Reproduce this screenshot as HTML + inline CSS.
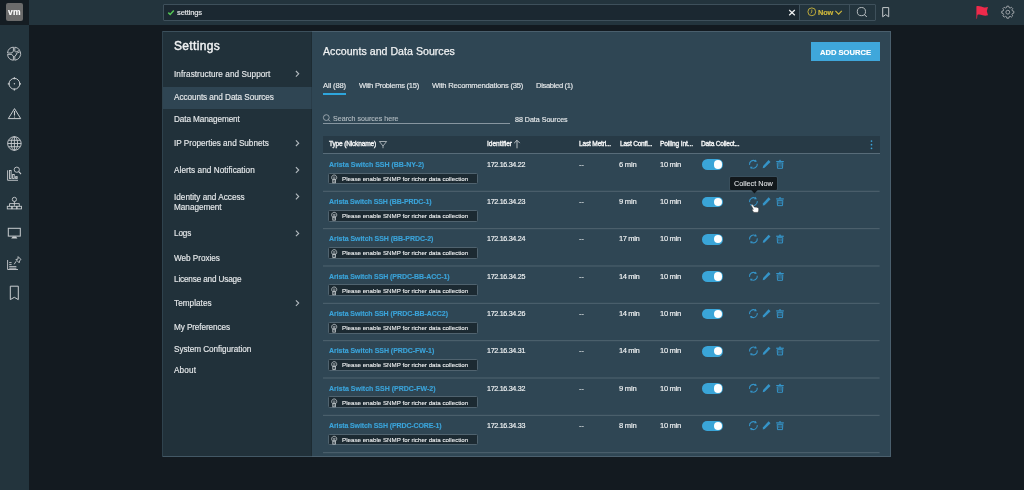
<!DOCTYPE html>
<html><head><meta charset="utf-8"><style>
html,body{margin:0;padding:0;}
body{width:1024px;height:490px;overflow:hidden;background:#131a20;position:relative;font-family:"Liberation Sans",sans-serif;}
.t{position:absolute;white-space:nowrap;line-height:1;will-change:transform;}
.r{position:absolute;}
svg{position:absolute;overflow:visible;}
</style></head><body>
<div class="r" style="left:0.00px;top:0.00px;width:1024.00px;height:25.00px;background:#23343d;"></div>
<div class="r" style="left:0.00px;top:25.00px;width:29.00px;height:465.00px;background:#23343d;"></div>
<div class="r" style="left:0.00px;top:0.00px;width:29.00px;height:25.00px;background:#151d23;"></div>
<div class="r" style="left:6.00px;top:3.00px;width:17.00px;height:18.00px;background:#6b6b6b;border-radius:2px;"></div>
<div class="t" style="left:8.00px;top:8.00px;font-size:8.5px;color:#ffffff;font-weight:bold;letter-spacing:0.357px;-webkit-text-stroke:0.15px #ffffff;">vm</div>
<svg width="1024" height="490" viewBox="0 0 1024 490" style="left:0;top:0;"><path d="M14.80 47.14 A6.6 6.6 0 0 1 19.75 50.29 L15.88 52.10 A2.4 2.4 0 0 0 14.80 51.40 Z M20.34 51.56 A6.6 6.6 0 0 1 14.80 60.26 L14.80 56.00 A2.4 2.4 0 0 0 16.48 53.36 Z M13.40 60.26 A6.6 6.6 0 0 1 7.54 54.40 L11.80 54.40 A2.4 2.4 0 0 0 13.40 56.00 Z M7.54 53.00 A6.6 6.6 0 0 1 13.40 47.14 L13.40 51.40 A2.4 2.4 0 0 0 11.80 53.00 Z " fill="none" stroke="#c9cdd0" stroke-width="0.9" stroke-linejoin="round"/><g fill="none" stroke="#c9cdd0" stroke-width="1"><circle cx="14.4" cy="83.8" r="5.4"/><path d="M14.4 77.2 V79.2 M14.4 90.39999999999999 V88.39999999999999 M7.800000000000001 83.8 H9.8 M21.0 83.8 H19.0" stroke-width="1.3"/></g><circle cx="14.4" cy="83.8" r="0.7" fill="#c9cdd0"/><path d="M14.5 108.6 L8.3 118.6 H20.7 Z" fill="none" stroke="#c9cdd0" stroke-width="1" stroke-linejoin="round"/><path d="M14.5 111 V115.6" stroke="#c9cdd0" stroke-width="1.1"/><circle cx="14.5" cy="117" r="0.6" fill="#c9cdd0"/><g fill="none" stroke="#c9cdd0" stroke-width="0.9"><circle cx="14.4" cy="143.5" r="6.8"/><ellipse cx="14.4" cy="143.5" rx="3.2" ry="6.8"/><path d="M14.4 136.7 V150.3 M7.6000000000000005 143.5 H21.2 M8.8 140.3 H20.0 M8.8 146.7 H20.0"/></g><g fill="none" stroke="#c9cdd0" stroke-width="0.9"><path d="M7.6 170.3 V180.3 H18"/><rect x="9.5" y="170.5" width="1.6" height="8" /><rect x="12.6" y="174.5" width="1.6" height="4"/><rect x="15.6" y="176.6" width="1.6" height="1.9"/><circle cx="16.8" cy="169.7" r="2.6"/><path d="M18.7 171.7 L21 174" stroke-width="1.1"/></g><g fill="none" stroke="#c9cdd0" stroke-width="0.9"><circle cx="14.4" cy="199.4" r="2.1"/><path d="M14.4 201.5 V205.8 M9.5 206.3 V203.6 H19.3 V206.3"/><rect x="7.3" y="206.3" width="4.4" height="2.6"/><rect x="12.2" y="206.3" width="4.4" height="2.6"/><rect x="17.1" y="206.3" width="4.4" height="2.6"/></g><rect x="8.3" y="228.3" width="12" height="7.8" fill="none" stroke="#c9cdd0" stroke-width="1"/><path d="M12.8 236.5 H16 L17.4 238.6 H11.2 Z" fill="#c9cdd0"/><g fill="none" stroke="#c9cdd0" stroke-width="0.9"><path d="M7.6 260 V269.5 H18 M9.2 262.6 H11.6 M9.2 264.6 H11.6 M9.2 266.6 H16.4 M9.2 268.2 H16.4" /><path d="M18.1 256.6 L21 259.5 L19.6 260.6 L19.2 262.8 L15.9 259.5 L18 259.1 Z M16.2 261.2 L14.2 264.3" stroke-linejoin="round"/></g><path d="M10.3 286.2 H18.3 V299.6 L14.3 297.3 L10.3 299.6 Z" fill="none" stroke="#c9cdd0" stroke-width="1"/></svg>
<div class="r" style="left:163.00px;top:4.00px;width:713.00px;height:17.00px;background:#1b2831;box-sizing:border-box;border:1px solid #3e505b;border-radius:1px;"></div>
<div class="r" style="left:800.00px;top:5.00px;width:75.00px;height:15.00px;background:#23343d;"></div>
<div class="r" style="left:799.00px;top:5.00px;width:1.00px;height:15.00px;background:#3e505b;"></div>
<div class="r" style="left:849.00px;top:5.00px;width:1.00px;height:15.00px;background:#3e505b;"></div>
<div class="t" style="left:177.00px;top:8.70px;font-size:7.6px;color:#e8eaec;letter-spacing:-0.149px;-webkit-text-stroke:0.15px #e8eaec;">settings</div>
<div class="t" style="left:818.00px;top:9.00px;font-size:7.4px;color:#cdb73c;font-weight:bold;letter-spacing:-0.207px;-webkit-text-stroke:0.15px #cdb73c;">Now</div>
<svg width="1024" height="490" viewBox="0 0 1024 490" style="left:0;top:0;"><path d="M168.3 12.6 L170.2 14.5 L173.8 10.4" fill="none" stroke="#54c455" stroke-width="1.5"/><path d="M789.2 10 L794.8 15.2 M794.8 10 L789.2 15.2" stroke="#f0f2f3" stroke-width="1.2"/><circle cx="811.8" cy="11.8" r="3.9" fill="none" stroke="#cdb73c" stroke-width="0.9"/><path d="M811.8 9.5 V12 L810.8 13.4" fill="none" stroke="#cdb73c" stroke-width="0.8"/><path d="M835.4 10.8 L838.6 14.2 L841.8 10.8" fill="none" stroke="#cdb73c" stroke-width="1.1"/><circle cx="861.4" cy="11.6" r="4.1" fill="none" stroke="#c4c9cc" stroke-width="0.9"/><path d="M864.3 14.5 L866.8 17" stroke="#c4c9cc" stroke-width="1"/><path d="M882.7 7.6 H888.7 V16.8 L885.7 14.6 L882.7 16.8 Z" fill="none" stroke="#c4c9cc" stroke-width="1"/><path d="M976.4 6.2 C979 5.4 981.5 6.6 984.2 7.4 C985.6 7.6 986.9 7.2 988 7 L986.8 11 L988 15.2 C986.4 15.8 984.6 15.9 982.6 15.3 C980.6 14.6 978.6 14.2 977.4 15 L977 18.8 L976.4 18.8 Z" fill="#ee2a4b"/><path d="M1006.56 7.56 L1006.85 6.18 L1008.75 6.18 L1009.04 7.56 L1010.20 8.04 L1011.39 7.26 L1012.74 8.61 L1011.96 9.80 L1012.44 10.96 L1013.82 11.25 L1013.82 13.15 L1012.44 13.44 L1011.96 14.60 L1012.74 15.79 L1011.39 17.14 L1010.20 16.36 L1009.04 16.84 L1008.75 18.22 L1006.85 18.22 L1006.56 16.84 L1005.40 16.36 L1004.21 17.14 L1002.86 15.79 L1003.64 14.60 L1003.16 13.44 L1001.78 13.15 L1001.78 11.25 L1003.16 10.96 L1003.64 9.80 L1002.86 8.61 L1004.21 7.26 L1005.40 8.04 Z" fill="none" stroke="#a9aeb2" stroke-width="0.9" stroke-linejoin="round"/><circle cx="1007.8" cy="12.2" r="1.9" fill="none" stroke="#a9aeb2" stroke-width="0.9"/></svg>
<div class="r" style="left:163.00px;top:32.00px;width:149.00px;height:424.00px;background:#21313a;"></div>
<div class="r" style="left:312.00px;top:32.00px;width:578.00px;height:424.00px;background:#2f4654;"></div>
<div class="r" style="left:163.00px;top:87.00px;width:149.00px;height:22.00px;background:#2f4553;"></div>
<div class="r" style="left:162.00px;top:31.00px;width:150.00px;height:1.00px;background:#3c505c;"></div>
<div class="r" style="left:312.00px;top:31.00px;width:579.00px;height:1.00px;background:#4a5f6d;"></div>
<div class="r" style="left:162.00px;top:31.00px;width:1.00px;height:426.00px;background:#2f424d;"></div>
<div class="r" style="left:890.00px;top:31.00px;width:1.00px;height:426.00px;background:#4a5f6d;"></div>
<div class="r" style="left:163.00px;top:456.00px;width:149.00px;height:1.00px;background:#435865;"></div>
<div class="r" style="left:312.00px;top:456.00px;width:579.00px;height:1.00px;background:#4b606e;"></div>
<div class="r" style="left:311.00px;top:32.00px;width:1.00px;height:424.00px;background:rgba(0,0,0,0.12);"></div>
<div class="t" style="left:174.00px;top:39.50px;font-size:12px;color:#f0f2f3;letter-spacing:0.330px;-webkit-text-stroke:0.45px #f0f2f3;">Settings</div>
<div class="t" style="left:174.00px;top:70.80px;font-size:8.2px;color:#e6e9eb;letter-spacing:0.051px;-webkit-text-stroke:0.15px #e6e9eb;">Infrastructure and Support</div>
<div class="t" style="left:174.00px;top:94.20px;font-size:8.2px;color:#e6e9eb;letter-spacing:-0.066px;-webkit-text-stroke:0.15px #e6e9eb;">Accounts and Data Sources</div>
<div class="t" style="left:174.00px;top:116.30px;font-size:8.2px;color:#e6e9eb;letter-spacing:-0.111px;-webkit-text-stroke:0.15px #e6e9eb;">Data Management</div>
<div class="t" style="left:174.00px;top:140.20px;font-size:8.2px;color:#e6e9eb;letter-spacing:-0.027px;-webkit-text-stroke:0.15px #e6e9eb;">IP Properties and Subnets</div>
<div class="t" style="left:174.00px;top:167.00px;font-size:8.2px;color:#e6e9eb;letter-spacing:0.049px;-webkit-text-stroke:0.15px #e6e9eb;">Alerts and Notification</div>
<div class="t" style="left:174.00px;top:193.50px;font-size:8.2px;color:#e6e9eb;letter-spacing:0.008px;-webkit-text-stroke:0.15px #e6e9eb;">Identity and Access</div>
<div class="t" style="left:174.00px;top:204.10px;font-size:8.2px;color:#e6e9eb;letter-spacing:-0.016px;-webkit-text-stroke:0.15px #e6e9eb;">Management</div>
<div class="t" style="left:174.00px;top:230.40px;font-size:8.2px;color:#e6e9eb;letter-spacing:-0.145px;-webkit-text-stroke:0.15px #e6e9eb;">Logs</div>
<div class="t" style="left:174.00px;top:254.70px;font-size:8.2px;color:#e6e9eb;letter-spacing:-0.030px;-webkit-text-stroke:0.15px #e6e9eb;">Web Proxies</div>
<div class="t" style="left:174.00px;top:276.30px;font-size:8.2px;color:#e6e9eb;letter-spacing:-0.165px;-webkit-text-stroke:0.15px #e6e9eb;">License and Usage</div>
<div class="t" style="left:174.00px;top:300.10px;font-size:8.2px;color:#e6e9eb;letter-spacing:0.036px;-webkit-text-stroke:0.15px #e6e9eb;">Templates</div>
<div class="t" style="left:174.00px;top:324.00px;font-size:8.2px;color:#e6e9eb;letter-spacing:-0.101px;-webkit-text-stroke:0.15px #e6e9eb;">My Preferences</div>
<div class="t" style="left:174.00px;top:345.50px;font-size:8.2px;color:#e6e9eb;letter-spacing:-0.050px;-webkit-text-stroke:0.15px #e6e9eb;">System Configuration</div>
<div class="t" style="left:174.00px;top:367.10px;font-size:8.2px;color:#e6e9eb;letter-spacing:0.134px;-webkit-text-stroke:0.15px #e6e9eb;">About</div>
<svg width="1024" height="490" viewBox="0 0 1024 490" style="left:0;top:0;"><path d="M295.9 71.00 L298.7 73.80 L295.9 76.60" fill="none" stroke="#b4bbc0" stroke-width="1.1"/><path d="M295.9 140.40 L298.7 143.20 L295.9 146.00" fill="none" stroke="#b4bbc0" stroke-width="1.1"/><path d="M295.9 167.20 L298.7 170.00 L295.9 172.80" fill="none" stroke="#b4bbc0" stroke-width="1.1"/><path d="M295.9 193.70 L298.7 196.50 L295.9 199.30" fill="none" stroke="#b4bbc0" stroke-width="1.1"/><path d="M295.9 230.60 L298.7 233.40 L295.9 236.20" fill="none" stroke="#b4bbc0" stroke-width="1.1"/><path d="M295.9 300.30 L298.7 303.10 L295.9 305.90" fill="none" stroke="#b4bbc0" stroke-width="1.1"/></svg>
<div class="t" style="left:323.30px;top:46.00px;font-size:10.6px;color:#f0f2f3;letter-spacing:0.024px;-webkit-text-stroke:0.25px #f0f2f3;">Accounts and Data Sources</div>
<div class="t" style="left:323.00px;top:82.10px;font-size:7.6px;color:#e6e9eb;letter-spacing:-0.134px;-webkit-text-stroke:0.15px #e6e9eb;">All (88)</div>
<div class="t" style="left:359.20px;top:82.10px;font-size:7.6px;color:#e6e9eb;letter-spacing:-0.280px;-webkit-text-stroke:0.15px #e6e9eb;">With Problems (15)</div>
<div class="t" style="left:431.80px;top:82.10px;font-size:7.6px;color:#e6e9eb;letter-spacing:-0.204px;-webkit-text-stroke:0.15px #e6e9eb;">With Recommendations (35)</div>
<div class="t" style="left:535.80px;top:82.10px;font-size:7.6px;color:#e6e9eb;letter-spacing:-0.348px;-webkit-text-stroke:0.15px #e6e9eb;">Disabled (1)</div>
<div class="r" style="left:323.00px;top:93.00px;width:23.00px;height:2.00px;background:#2ea6dd;"></div>
<div class="r" style="left:811.00px;top:42.00px;width:69.00px;height:19.00px;background:#3fa7db;"></div>
<div class="t" style="left:820.00px;top:48.50px;font-size:7.6px;color:#ffffff;font-weight:bold;letter-spacing:-0.009px;-webkit-text-stroke:0.15px #ffffff;">ADD SOURCE</div>
<div class="t" style="left:333.00px;top:116.00px;font-size:7.1px;color:#aeb8be;letter-spacing:0.005px;-webkit-text-stroke:0.15px #aeb8be;">Search sources here</div>
<svg width="1024" height="490" viewBox="0 0 1024 490" style="left:0;top:0;"><circle cx="326.3" cy="117.6" r="2.9" fill="none" stroke="#aeb8be" stroke-width="0.8"/><path d="M328.4 119.7 L330 121.3" stroke="#aeb8be" stroke-width="0.9"/></svg>
<div class="r" style="left:323.00px;top:123.00px;width:187.00px;height:1.00px;background:#8796a0;"></div>
<div class="t" style="left:515.30px;top:116.70px;font-size:7.1px;color:#e6e9eb;letter-spacing:-0.012px;-webkit-text-stroke:0.15px #e6e9eb;">88 Data Sources</div>
<div class="r" style="left:323.00px;top:135.50px;width:556.60px;height:17.50px;background:#273a46;"></div>
<div class="r" style="left:323.00px;top:153.00px;width:556.60px;height:1.30px;background:#586c79;"></div>
<div class="t" style="left:328.80px;top:141.00px;font-size:6.6px;color:#f2f4f5;letter-spacing:-0.192px;-webkit-text-stroke:0.35px #f2f4f5;">Type (Nickname)</div>
<div class="t" style="left:486.90px;top:141.00px;font-size:6.6px;color:#f2f4f5;letter-spacing:-0.031px;-webkit-text-stroke:0.35px #f2f4f5;">Identifier</div>
<div class="t" style="left:578.90px;top:141.00px;font-size:6.6px;color:#f2f4f5;letter-spacing:-0.190px;-webkit-text-stroke:0.35px #f2f4f5;">Last Metri...</div>
<div class="t" style="left:619.70px;top:141.00px;font-size:6.6px;color:#f2f4f5;letter-spacing:-0.232px;-webkit-text-stroke:0.35px #f2f4f5;">Last Confi...</div>
<div class="t" style="left:660.30px;top:141.00px;font-size:6.6px;color:#f2f4f5;letter-spacing:-0.106px;-webkit-text-stroke:0.35px #f2f4f5;">Polling Int...</div>
<div class="t" style="left:701.00px;top:141.00px;font-size:6.6px;color:#f2f4f5;letter-spacing:-0.203px;-webkit-text-stroke:0.35px #f2f4f5;">Data Collect...</div>
<div class="t" style="left:328.60px;top:160.70px;font-size:7.0px;color:#3ba3d9;font-weight:bold;letter-spacing:-0.007px;-webkit-text-stroke:0.15px #3ba3d9;">Arista Switch SSH (BB-NY-2)</div>
<div class="t" style="left:487.00px;top:161.70px;font-size:7.1px;color:#f2f4f5;letter-spacing:-0.280px;-webkit-text-stroke:0.15px #f2f4f5;">172.16.34.22</div>
<div class="t" style="left:579.00px;top:160.70px;font-size:7.2px;color:#f2f4f5;letter-spacing:0.102px;-webkit-text-stroke:0.15px #f2f4f5;">--</div>
<div class="t" style="left:619.30px;top:160.70px;font-size:7.6px;color:#f2f4f5;letter-spacing:-0.237px;-webkit-text-stroke:0.15px #f2f4f5;">6 min</div>
<div class="t" style="left:660.20px;top:160.70px;font-size:7.6px;color:#f2f4f5;letter-spacing:-0.335px;-webkit-text-stroke:0.15px #f2f4f5;">10 min</div>
<div class="r" style="left:702.00px;top:159.30px;width:21.00px;height:10.60px;background:#3aa5d8;border-radius:6px;"></div>
<div class="r" style="left:713.70px;top:160.30px;width:8.40px;height:8.40px;background:#ffffff;border-radius:50%;"></div>
<div class="r" style="left:328.30px;top:172.50px;width:149.30px;height:11.70px;background:#1c2a32;box-sizing:border-box;border:1px solid #50636f;border-radius:1.5px;"></div>
<div class="t" style="left:341.60px;top:175.60px;font-size:6.2px;color:#eef0f1;letter-spacing:0.003px;-webkit-text-stroke:0.1px #eef0f1;">Please enable SNMP for richer data collection</div>
<div class="t" style="left:328.60px;top:198.03px;font-size:7.0px;color:#3ba3d9;font-weight:bold;letter-spacing:-0.113px;-webkit-text-stroke:0.15px #3ba3d9;">Arista Switch SSH (BB-PRDC-1)</div>
<div class="t" style="left:487.00px;top:199.03px;font-size:7.1px;color:#f2f4f5;letter-spacing:-0.280px;-webkit-text-stroke:0.15px #f2f4f5;">172.16.34.23</div>
<div class="t" style="left:579.00px;top:198.03px;font-size:7.2px;color:#f2f4f5;letter-spacing:0.102px;-webkit-text-stroke:0.15px #f2f4f5;">--</div>
<div class="t" style="left:619.30px;top:198.03px;font-size:7.6px;color:#f2f4f5;letter-spacing:-0.237px;-webkit-text-stroke:0.15px #f2f4f5;">9 min</div>
<div class="t" style="left:660.20px;top:198.03px;font-size:7.6px;color:#f2f4f5;letter-spacing:-0.335px;-webkit-text-stroke:0.15px #f2f4f5;">10 min</div>
<div class="r" style="left:702.00px;top:196.63px;width:21.00px;height:10.60px;background:#3aa5d8;border-radius:6px;"></div>
<div class="r" style="left:713.70px;top:197.63px;width:8.40px;height:8.40px;background:#ffffff;border-radius:50%;"></div>
<div class="r" style="left:328.30px;top:209.83px;width:149.30px;height:11.70px;background:#1c2a32;box-sizing:border-box;border:1px solid #50636f;border-radius:1.5px;"></div>
<div class="t" style="left:341.60px;top:212.93px;font-size:6.2px;color:#eef0f1;letter-spacing:0.003px;-webkit-text-stroke:0.1px #eef0f1;">Please enable SNMP for richer data collection</div>
<div class="t" style="left:328.60px;top:235.36px;font-size:7.0px;color:#3ba3d9;font-weight:bold;letter-spacing:-0.048px;-webkit-text-stroke:0.15px #3ba3d9;">Arista Switch SSH (BB-PRDC-2)</div>
<div class="t" style="left:487.00px;top:236.36px;font-size:7.1px;color:#f2f4f5;letter-spacing:-0.280px;-webkit-text-stroke:0.15px #f2f4f5;">172.16.34.24</div>
<div class="t" style="left:579.00px;top:235.36px;font-size:7.2px;color:#f2f4f5;letter-spacing:0.102px;-webkit-text-stroke:0.15px #f2f4f5;">--</div>
<div class="t" style="left:619.30px;top:235.36px;font-size:7.6px;color:#f2f4f5;letter-spacing:-0.402px;-webkit-text-stroke:0.15px #f2f4f5;">17 min</div>
<div class="t" style="left:660.20px;top:235.36px;font-size:7.6px;color:#f2f4f5;letter-spacing:-0.335px;-webkit-text-stroke:0.15px #f2f4f5;">10 min</div>
<div class="r" style="left:702.00px;top:233.96px;width:21.00px;height:10.60px;background:#3aa5d8;border-radius:6px;"></div>
<div class="r" style="left:713.70px;top:234.96px;width:8.40px;height:8.40px;background:#ffffff;border-radius:50%;"></div>
<div class="r" style="left:328.30px;top:247.16px;width:149.30px;height:11.70px;background:#1c2a32;box-sizing:border-box;border:1px solid #50636f;border-radius:1.5px;"></div>
<div class="t" style="left:341.60px;top:250.26px;font-size:6.2px;color:#eef0f1;letter-spacing:0.003px;-webkit-text-stroke:0.1px #eef0f1;">Please enable SNMP for richer data collection</div>
<div class="t" style="left:328.60px;top:272.69px;font-size:7.0px;color:#3ba3d9;font-weight:bold;letter-spacing:-0.084px;-webkit-text-stroke:0.15px #3ba3d9;">Arista Switch SSH (PRDC-BB-ACC-1)</div>
<div class="t" style="left:487.00px;top:273.69px;font-size:7.1px;color:#f2f4f5;letter-spacing:-0.280px;-webkit-text-stroke:0.15px #f2f4f5;">172.16.34.25</div>
<div class="t" style="left:579.00px;top:272.69px;font-size:7.2px;color:#f2f4f5;letter-spacing:0.102px;-webkit-text-stroke:0.15px #f2f4f5;">--</div>
<div class="t" style="left:619.30px;top:272.69px;font-size:7.6px;color:#f2f4f5;letter-spacing:-0.402px;-webkit-text-stroke:0.15px #f2f4f5;">14 min</div>
<div class="t" style="left:660.20px;top:272.69px;font-size:7.6px;color:#f2f4f5;letter-spacing:-0.335px;-webkit-text-stroke:0.15px #f2f4f5;">10 min</div>
<div class="r" style="left:702.00px;top:271.29px;width:21.00px;height:10.60px;background:#3aa5d8;border-radius:6px;"></div>
<div class="r" style="left:713.70px;top:272.29px;width:8.40px;height:8.40px;background:#ffffff;border-radius:50%;"></div>
<div class="r" style="left:328.30px;top:284.49px;width:149.30px;height:11.70px;background:#1c2a32;box-sizing:border-box;border:1px solid #50636f;border-radius:1.5px;"></div>
<div class="t" style="left:341.60px;top:287.59px;font-size:6.2px;color:#eef0f1;letter-spacing:0.003px;-webkit-text-stroke:0.1px #eef0f1;">Please enable SNMP for richer data collection</div>
<div class="t" style="left:328.60px;top:310.02px;font-size:7.0px;color:#3ba3d9;font-weight:bold;letter-spacing:-0.064px;-webkit-text-stroke:0.15px #3ba3d9;">Arista Switch SSH (PRDC-BB-ACC2)</div>
<div class="t" style="left:487.00px;top:311.02px;font-size:7.1px;color:#f2f4f5;letter-spacing:-0.280px;-webkit-text-stroke:0.15px #f2f4f5;">172.16.34.26</div>
<div class="t" style="left:579.00px;top:310.02px;font-size:7.2px;color:#f2f4f5;letter-spacing:0.102px;-webkit-text-stroke:0.15px #f2f4f5;">--</div>
<div class="t" style="left:619.30px;top:310.02px;font-size:7.6px;color:#f2f4f5;letter-spacing:-0.402px;-webkit-text-stroke:0.15px #f2f4f5;">14 min</div>
<div class="t" style="left:660.20px;top:310.02px;font-size:7.6px;color:#f2f4f5;letter-spacing:-0.335px;-webkit-text-stroke:0.15px #f2f4f5;">10 min</div>
<div class="r" style="left:702.00px;top:308.62px;width:21.00px;height:10.60px;background:#3aa5d8;border-radius:6px;"></div>
<div class="r" style="left:713.70px;top:309.62px;width:8.40px;height:8.40px;background:#ffffff;border-radius:50%;"></div>
<div class="r" style="left:328.30px;top:321.82px;width:149.30px;height:11.70px;background:#1c2a32;box-sizing:border-box;border:1px solid #50636f;border-radius:1.5px;"></div>
<div class="t" style="left:341.60px;top:324.92px;font-size:6.2px;color:#eef0f1;letter-spacing:0.003px;-webkit-text-stroke:0.1px #eef0f1;">Please enable SNMP for richer data collection</div>
<div class="t" style="left:328.60px;top:347.35px;font-size:7.0px;color:#3ba3d9;font-weight:bold;letter-spacing:-0.042px;-webkit-text-stroke:0.15px #3ba3d9;">Arista Switch SSH (PRDC-FW-1)</div>
<div class="t" style="left:487.00px;top:348.35px;font-size:7.1px;color:#f2f4f5;letter-spacing:-0.280px;-webkit-text-stroke:0.15px #f2f4f5;">172.16.34.31</div>
<div class="t" style="left:579.00px;top:347.35px;font-size:7.2px;color:#f2f4f5;letter-spacing:0.102px;-webkit-text-stroke:0.15px #f2f4f5;">--</div>
<div class="t" style="left:619.30px;top:347.35px;font-size:7.6px;color:#f2f4f5;letter-spacing:-0.402px;-webkit-text-stroke:0.15px #f2f4f5;">14 min</div>
<div class="t" style="left:660.20px;top:347.35px;font-size:7.6px;color:#f2f4f5;letter-spacing:-0.335px;-webkit-text-stroke:0.15px #f2f4f5;">10 min</div>
<div class="r" style="left:702.00px;top:345.95px;width:21.00px;height:10.60px;background:#3aa5d8;border-radius:6px;"></div>
<div class="r" style="left:713.70px;top:346.95px;width:8.40px;height:8.40px;background:#ffffff;border-radius:50%;"></div>
<div class="r" style="left:328.30px;top:359.15px;width:149.30px;height:11.70px;background:#1c2a32;box-sizing:border-box;border:1px solid #50636f;border-radius:1.5px;"></div>
<div class="t" style="left:341.60px;top:362.25px;font-size:6.2px;color:#eef0f1;letter-spacing:0.003px;-webkit-text-stroke:0.1px #eef0f1;">Please enable SNMP for richer data collection</div>
<div class="t" style="left:328.60px;top:384.68px;font-size:7.0px;color:#3ba3d9;font-weight:bold;letter-spacing:0.003px;-webkit-text-stroke:0.15px #3ba3d9;">Arista Switch SSH (PRDC-FW-2)</div>
<div class="t" style="left:487.00px;top:385.68px;font-size:7.1px;color:#f2f4f5;letter-spacing:-0.280px;-webkit-text-stroke:0.15px #f2f4f5;">172.16.34.32</div>
<div class="t" style="left:579.00px;top:384.68px;font-size:7.2px;color:#f2f4f5;letter-spacing:0.102px;-webkit-text-stroke:0.15px #f2f4f5;">--</div>
<div class="t" style="left:619.30px;top:384.68px;font-size:7.6px;color:#f2f4f5;letter-spacing:-0.237px;-webkit-text-stroke:0.15px #f2f4f5;">9 min</div>
<div class="t" style="left:660.20px;top:384.68px;font-size:7.6px;color:#f2f4f5;letter-spacing:-0.335px;-webkit-text-stroke:0.15px #f2f4f5;">10 min</div>
<div class="r" style="left:702.00px;top:383.28px;width:21.00px;height:10.60px;background:#3aa5d8;border-radius:6px;"></div>
<div class="r" style="left:713.70px;top:384.28px;width:8.40px;height:8.40px;background:#ffffff;border-radius:50%;"></div>
<div class="r" style="left:328.30px;top:396.48px;width:149.30px;height:11.70px;background:#1c2a32;box-sizing:border-box;border:1px solid #50636f;border-radius:1.5px;"></div>
<div class="t" style="left:341.60px;top:399.58px;font-size:6.2px;color:#eef0f1;letter-spacing:0.003px;-webkit-text-stroke:0.1px #eef0f1;">Please enable SNMP for richer data collection</div>
<div class="t" style="left:328.60px;top:422.01px;font-size:7.0px;color:#3ba3d9;font-weight:bold;letter-spacing:-0.107px;-webkit-text-stroke:0.15px #3ba3d9;">Arista Switch SSH (PRDC-CORE-1)</div>
<div class="t" style="left:487.00px;top:423.01px;font-size:7.1px;color:#f2f4f5;letter-spacing:-0.280px;-webkit-text-stroke:0.15px #f2f4f5;">172.16.34.33</div>
<div class="t" style="left:579.00px;top:422.01px;font-size:7.2px;color:#f2f4f5;letter-spacing:0.102px;-webkit-text-stroke:0.15px #f2f4f5;">--</div>
<div class="t" style="left:619.30px;top:422.01px;font-size:7.6px;color:#f2f4f5;letter-spacing:-0.237px;-webkit-text-stroke:0.15px #f2f4f5;">8 min</div>
<div class="t" style="left:660.20px;top:422.01px;font-size:7.6px;color:#f2f4f5;letter-spacing:-0.335px;-webkit-text-stroke:0.15px #f2f4f5;">10 min</div>
<div class="r" style="left:702.00px;top:420.61px;width:21.00px;height:10.60px;background:#3aa5d8;border-radius:6px;"></div>
<div class="r" style="left:713.70px;top:421.61px;width:8.40px;height:8.40px;background:#ffffff;border-radius:50%;"></div>
<div class="r" style="left:328.30px;top:433.81px;width:149.30px;height:11.70px;background:#1c2a32;box-sizing:border-box;border:1px solid #50636f;border-radius:1.5px;"></div>
<div class="t" style="left:341.60px;top:436.91px;font-size:6.2px;color:#eef0f1;letter-spacing:0.003px;-webkit-text-stroke:0.1px #eef0f1;">Please enable SNMP for richer data collection</div>
<svg width="1024" height="490" viewBox="0 0 1024 490" style="left:0;top:0;"><rect x="323" y="190.80" width="556.6" height="1" fill="#506470"/><rect x="323" y="228.14" width="556.6" height="1" fill="#506470"/><rect x="323" y="265.48" width="556.6" height="1" fill="#506470"/><rect x="323" y="302.82" width="556.6" height="1" fill="#506470"/><rect x="323" y="340.16" width="556.6" height="1" fill="#506470"/><rect x="323" y="377.50" width="556.6" height="1" fill="#506470"/><rect x="323" y="414.84" width="556.6" height="1" fill="#506470"/><rect x="323" y="452.18" width="556.6" height="1" fill="#506470"/><path d="M749.54 164.84 A3.9 3.9 0 0 1 755.47 160.99" fill="none" stroke="#3594c8" stroke-width="1.1"/><path d="M756.82 161.84 L755.75 159.40 L754.16 161.95 Z" fill="#3594c8"/><path d="M757.26 163.76 A3.9 3.9 0 0 1 751.33 167.61" fill="none" stroke="#3594c8" stroke-width="1.1"/><path d="M749.98 166.76 L751.05 169.20 L752.64 166.65 Z" fill="#3594c8"/><path d="M768.6 160.00 L770.5 161.90 L764.6 167.80 L762.7 168.20 L763.1 166.00 Z" fill="#3594c8"/><path d="M776.2 161.60 H783.8" stroke="#3594c8" stroke-width="1.2"/><path d="M779.4 161.20 V160.30 H780.6 V161.20" fill="none" stroke="#3594c8" stroke-width="0.9"/><path d="M777.2 163.00 H782.8 L782.5 168.30 H777.5 Z" fill="none" stroke="#3594c8" stroke-width="1"/><path d="M778.7 164.00 V166.80 M780 164.00 V166.80 M781.3 164.00 V166.80" stroke="#3594c8" stroke-width="0.6"/><path d="M332.4 179.40 C331.2 178.50 331.3 175.10 334.2 175.00 C337.1 175.10 337.2 178.50 336.0 179.40 Z" fill="none" stroke="#c9cfd2" stroke-width="0.8"/><path d="M332.9 177.10 H335.5 M333.1 178.30 H335.3" stroke="#c9cfd2" stroke-width="0.6"/><rect x="332.8" y="179.90" width="2.8" height="2.9" fill="none" stroke="#c9cfd2" stroke-width="0.8"/><circle cx="334.2" cy="181.35" r="0.5" fill="#c9cfd2"/><path d="M749.54 202.17 A3.9 3.9 0 0 1 755.47 198.32" fill="none" stroke="#3594c8" stroke-width="1.1"/><path d="M756.82 199.17 L755.75 196.73 L754.16 199.28 Z" fill="#3594c8"/><path d="M757.26 201.09 A3.9 3.9 0 0 1 751.33 204.94" fill="none" stroke="#3594c8" stroke-width="1.1"/><path d="M749.98 204.09 L751.05 206.53 L752.64 203.98 Z" fill="#3594c8"/><path d="M768.6 197.33 L770.5 199.23 L764.6 205.13 L762.7 205.53 L763.1 203.33 Z" fill="#3594c8"/><path d="M776.2 198.93 H783.8" stroke="#3594c8" stroke-width="1.2"/><path d="M779.4 198.53 V197.63 H780.6 V198.53" fill="none" stroke="#3594c8" stroke-width="0.9"/><path d="M777.2 200.33 H782.8 L782.5 205.63 H777.5 Z" fill="none" stroke="#3594c8" stroke-width="1"/><path d="M778.7 201.33 V204.13 M780 201.33 V204.13 M781.3 201.33 V204.13" stroke="#3594c8" stroke-width="0.6"/><path d="M332.4 216.73 C331.2 215.83 331.3 212.43 334.2 212.33 C337.1 212.43 337.2 215.83 336.0 216.73 Z" fill="none" stroke="#c9cfd2" stroke-width="0.8"/><path d="M332.9 214.43 H335.5 M333.1 215.63 H335.3" stroke="#c9cfd2" stroke-width="0.6"/><rect x="332.8" y="217.23" width="2.8" height="2.9" fill="none" stroke="#c9cfd2" stroke-width="0.8"/><circle cx="334.2" cy="218.68" r="0.5" fill="#c9cfd2"/><path d="M749.54 239.50 A3.9 3.9 0 0 1 755.47 235.65" fill="none" stroke="#3594c8" stroke-width="1.1"/><path d="M756.82 236.50 L755.75 234.06 L754.16 236.61 Z" fill="#3594c8"/><path d="M757.26 238.42 A3.9 3.9 0 0 1 751.33 242.27" fill="none" stroke="#3594c8" stroke-width="1.1"/><path d="M749.98 241.42 L751.05 243.86 L752.64 241.31 Z" fill="#3594c8"/><path d="M768.6 234.66 L770.5 236.56 L764.6 242.46 L762.7 242.86 L763.1 240.66 Z" fill="#3594c8"/><path d="M776.2 236.26 H783.8" stroke="#3594c8" stroke-width="1.2"/><path d="M779.4 235.86 V234.96 H780.6 V235.86" fill="none" stroke="#3594c8" stroke-width="0.9"/><path d="M777.2 237.66 H782.8 L782.5 242.96 H777.5 Z" fill="none" stroke="#3594c8" stroke-width="1"/><path d="M778.7 238.66 V241.46 M780 238.66 V241.46 M781.3 238.66 V241.46" stroke="#3594c8" stroke-width="0.6"/><path d="M332.4 254.06 C331.2 253.16 331.3 249.76 334.2 249.66 C337.1 249.76 337.2 253.16 336.0 254.06 Z" fill="none" stroke="#c9cfd2" stroke-width="0.8"/><path d="M332.9 251.76 H335.5 M333.1 252.96 H335.3" stroke="#c9cfd2" stroke-width="0.6"/><rect x="332.8" y="254.56" width="2.8" height="2.9" fill="none" stroke="#c9cfd2" stroke-width="0.8"/><circle cx="334.2" cy="256.01" r="0.5" fill="#c9cfd2"/><path d="M749.54 276.83 A3.9 3.9 0 0 1 755.47 272.98" fill="none" stroke="#3594c8" stroke-width="1.1"/><path d="M756.82 273.83 L755.75 271.39 L754.16 273.94 Z" fill="#3594c8"/><path d="M757.26 275.75 A3.9 3.9 0 0 1 751.33 279.60" fill="none" stroke="#3594c8" stroke-width="1.1"/><path d="M749.98 278.75 L751.05 281.19 L752.64 278.64 Z" fill="#3594c8"/><path d="M768.6 271.99 L770.5 273.89 L764.6 279.79 L762.7 280.19 L763.1 277.99 Z" fill="#3594c8"/><path d="M776.2 273.59 H783.8" stroke="#3594c8" stroke-width="1.2"/><path d="M779.4 273.19 V272.29 H780.6 V273.19" fill="none" stroke="#3594c8" stroke-width="0.9"/><path d="M777.2 274.99 H782.8 L782.5 280.29 H777.5 Z" fill="none" stroke="#3594c8" stroke-width="1"/><path d="M778.7 275.99 V278.79 M780 275.99 V278.79 M781.3 275.99 V278.79" stroke="#3594c8" stroke-width="0.6"/><path d="M332.4 291.39 C331.2 290.49 331.3 287.09 334.2 286.99 C337.1 287.09 337.2 290.49 336.0 291.39 Z" fill="none" stroke="#c9cfd2" stroke-width="0.8"/><path d="M332.9 289.09 H335.5 M333.1 290.29 H335.3" stroke="#c9cfd2" stroke-width="0.6"/><rect x="332.8" y="291.89" width="2.8" height="2.9" fill="none" stroke="#c9cfd2" stroke-width="0.8"/><circle cx="334.2" cy="293.34" r="0.5" fill="#c9cfd2"/><path d="M749.54 314.16 A3.9 3.9 0 0 1 755.47 310.31" fill="none" stroke="#3594c8" stroke-width="1.1"/><path d="M756.82 311.16 L755.75 308.72 L754.16 311.27 Z" fill="#3594c8"/><path d="M757.26 313.08 A3.9 3.9 0 0 1 751.33 316.93" fill="none" stroke="#3594c8" stroke-width="1.1"/><path d="M749.98 316.08 L751.05 318.52 L752.64 315.97 Z" fill="#3594c8"/><path d="M768.6 309.32 L770.5 311.22 L764.6 317.12 L762.7 317.52 L763.1 315.32 Z" fill="#3594c8"/><path d="M776.2 310.92 H783.8" stroke="#3594c8" stroke-width="1.2"/><path d="M779.4 310.52 V309.62 H780.6 V310.52" fill="none" stroke="#3594c8" stroke-width="0.9"/><path d="M777.2 312.32 H782.8 L782.5 317.62 H777.5 Z" fill="none" stroke="#3594c8" stroke-width="1"/><path d="M778.7 313.32 V316.12 M780 313.32 V316.12 M781.3 313.32 V316.12" stroke="#3594c8" stroke-width="0.6"/><path d="M332.4 328.72 C331.2 327.82 331.3 324.42 334.2 324.32 C337.1 324.42 337.2 327.82 336.0 328.72 Z" fill="none" stroke="#c9cfd2" stroke-width="0.8"/><path d="M332.9 326.42 H335.5 M333.1 327.62 H335.3" stroke="#c9cfd2" stroke-width="0.6"/><rect x="332.8" y="329.22" width="2.8" height="2.9" fill="none" stroke="#c9cfd2" stroke-width="0.8"/><circle cx="334.2" cy="330.67" r="0.5" fill="#c9cfd2"/><path d="M749.54 351.49 A3.9 3.9 0 0 1 755.47 347.64" fill="none" stroke="#3594c8" stroke-width="1.1"/><path d="M756.82 348.49 L755.75 346.05 L754.16 348.60 Z" fill="#3594c8"/><path d="M757.26 350.41 A3.9 3.9 0 0 1 751.33 354.26" fill="none" stroke="#3594c8" stroke-width="1.1"/><path d="M749.98 353.41 L751.05 355.85 L752.64 353.30 Z" fill="#3594c8"/><path d="M768.6 346.65 L770.5 348.55 L764.6 354.45 L762.7 354.85 L763.1 352.65 Z" fill="#3594c8"/><path d="M776.2 348.25 H783.8" stroke="#3594c8" stroke-width="1.2"/><path d="M779.4 347.85 V346.95 H780.6 V347.85" fill="none" stroke="#3594c8" stroke-width="0.9"/><path d="M777.2 349.65 H782.8 L782.5 354.95 H777.5 Z" fill="none" stroke="#3594c8" stroke-width="1"/><path d="M778.7 350.65 V353.45 M780 350.65 V353.45 M781.3 350.65 V353.45" stroke="#3594c8" stroke-width="0.6"/><path d="M332.4 366.05 C331.2 365.15 331.3 361.75 334.2 361.65 C337.1 361.75 337.2 365.15 336.0 366.05 Z" fill="none" stroke="#c9cfd2" stroke-width="0.8"/><path d="M332.9 363.75 H335.5 M333.1 364.95 H335.3" stroke="#c9cfd2" stroke-width="0.6"/><rect x="332.8" y="366.55" width="2.8" height="2.9" fill="none" stroke="#c9cfd2" stroke-width="0.8"/><circle cx="334.2" cy="368.00" r="0.5" fill="#c9cfd2"/><path d="M749.54 388.82 A3.9 3.9 0 0 1 755.47 384.97" fill="none" stroke="#3594c8" stroke-width="1.1"/><path d="M756.82 385.82 L755.75 383.38 L754.16 385.93 Z" fill="#3594c8"/><path d="M757.26 387.74 A3.9 3.9 0 0 1 751.33 391.59" fill="none" stroke="#3594c8" stroke-width="1.1"/><path d="M749.98 390.74 L751.05 393.18 L752.64 390.63 Z" fill="#3594c8"/><path d="M768.6 383.98 L770.5 385.88 L764.6 391.78 L762.7 392.18 L763.1 389.98 Z" fill="#3594c8"/><path d="M776.2 385.58 H783.8" stroke="#3594c8" stroke-width="1.2"/><path d="M779.4 385.18 V384.28 H780.6 V385.18" fill="none" stroke="#3594c8" stroke-width="0.9"/><path d="M777.2 386.98 H782.8 L782.5 392.28 H777.5 Z" fill="none" stroke="#3594c8" stroke-width="1"/><path d="M778.7 387.98 V390.78 M780 387.98 V390.78 M781.3 387.98 V390.78" stroke="#3594c8" stroke-width="0.6"/><path d="M332.4 403.38 C331.2 402.48 331.3 399.08 334.2 398.98 C337.1 399.08 337.2 402.48 336.0 403.38 Z" fill="none" stroke="#c9cfd2" stroke-width="0.8"/><path d="M332.9 401.08 H335.5 M333.1 402.28 H335.3" stroke="#c9cfd2" stroke-width="0.6"/><rect x="332.8" y="403.88" width="2.8" height="2.9" fill="none" stroke="#c9cfd2" stroke-width="0.8"/><circle cx="334.2" cy="405.33" r="0.5" fill="#c9cfd2"/><path d="M749.54 426.15 A3.9 3.9 0 0 1 755.47 422.30" fill="none" stroke="#3594c8" stroke-width="1.1"/><path d="M756.82 423.15 L755.75 420.71 L754.16 423.26 Z" fill="#3594c8"/><path d="M757.26 425.07 A3.9 3.9 0 0 1 751.33 428.92" fill="none" stroke="#3594c8" stroke-width="1.1"/><path d="M749.98 428.07 L751.05 430.51 L752.64 427.96 Z" fill="#3594c8"/><path d="M768.6 421.31 L770.5 423.21 L764.6 429.11 L762.7 429.51 L763.1 427.31 Z" fill="#3594c8"/><path d="M776.2 422.91 H783.8" stroke="#3594c8" stroke-width="1.2"/><path d="M779.4 422.51 V421.61 H780.6 V422.51" fill="none" stroke="#3594c8" stroke-width="0.9"/><path d="M777.2 424.31 H782.8 L782.5 429.61 H777.5 Z" fill="none" stroke="#3594c8" stroke-width="1"/><path d="M778.7 425.31 V428.11 M780 425.31 V428.11 M781.3 425.31 V428.11" stroke="#3594c8" stroke-width="0.6"/><path d="M332.4 440.71 C331.2 439.81 331.3 436.41 334.2 436.31 C337.1 436.41 337.2 439.81 336.0 440.71 Z" fill="none" stroke="#c9cfd2" stroke-width="0.8"/><path d="M332.9 438.41 H335.5 M333.1 439.61 H335.3" stroke="#c9cfd2" stroke-width="0.6"/><rect x="332.8" y="441.21" width="2.8" height="2.9" fill="none" stroke="#c9cfd2" stroke-width="0.8"/><circle cx="334.2" cy="442.66" r="0.5" fill="#c9cfd2"/></svg>
<svg width="1024" height="490" viewBox="0 0 1024 490" style="left:0;top:0;"><path d="M379.4 141.5 H386.6 L383 146 Z M383 146 V148.2" fill="none" stroke="#c9cfd3" stroke-width="0.75" stroke-linejoin="round"/><path d="M517 140.3 V148.3 M514.2 143.1 L517 140.3 L519.8 143.1" fill="none" stroke="#c9cfd3" stroke-width="0.9"/><circle cx="871.5" cy="141.1" r="0.85" fill="#3ba3d9"/><circle cx="871.5" cy="144.7" r="0.85" fill="#3ba3d9"/><circle cx="871.5" cy="148.3" r="0.85" fill="#3ba3d9"/></svg>
<div class="r" style="left:730.00px;top:177.00px;width:47.00px;height:13.00px;background:#12181c;border-radius:1px;box-shadow:0 0 0 0.7px #3e5360;"></div>
<div class="t" style="left:734.30px;top:179.70px;font-size:7.3px;color:#e8eaec;letter-spacing:-0.022px;-webkit-text-stroke:0.05px #e8eaec;">Collect Now</div>
<svg width="1024" height="490" viewBox="0 0 1024 490" style="left:0;top:0;"><path d="M751 189.8 H757.9 L754.4 193.5 Z" fill="#12181c"/><path d="M752.2 204.6 C751.5 204.2 750.9 204.7 751.2 205.4 L753.3 209.4 C752.6 209.2 751.8 209.5 752.2 210.3 L753.9 212.4 H757.9 C758.7 211.2 758.9 209.9 758.6 208.3 C758.1 207.4 757.3 207.4 756.8 207.6 C756.4 207.0 755.7 207.0 755.3 207.3 L754.1 206.8 L753.2 205.1 Z" fill="#ffffff" stroke="#222" stroke-width="0.5"/></svg>
</body></html>
